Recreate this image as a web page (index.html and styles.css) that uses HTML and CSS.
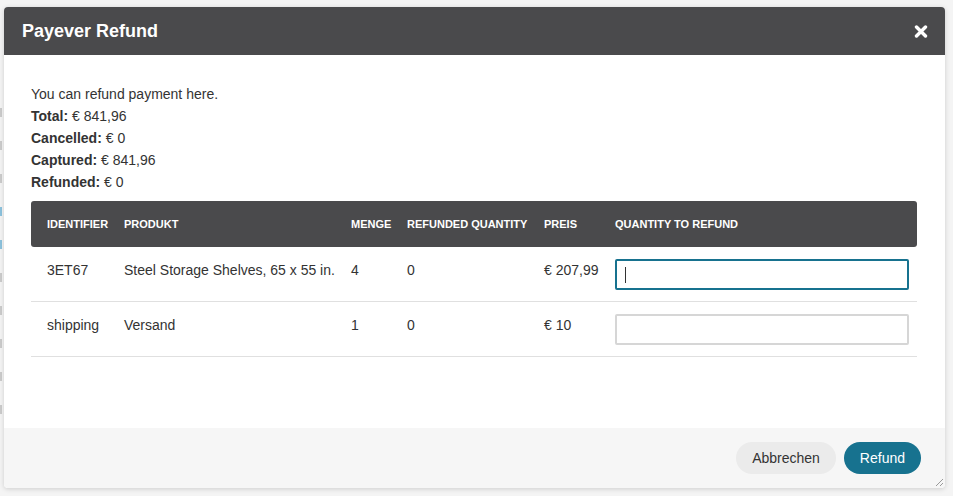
FILE: index.html
```html
<!DOCTYPE html>
<html lang="de">
<head>
<meta charset="utf-8">
<title>Payever Refund</title>
<link rel="stylesheet" href="styles.css">
</head>
<body>
<div class="page" aria-hidden="true">
  <div class="page-marks">
    <span class="mark"></span>
    <span class="mark"></span>
    <span class="mark"></span>
    <span class="mark link"></span>
    <span class="mark link"></span>
    <span class="mark"></span>
    <span class="mark"></span>
    <span class="mark"></span>
    <span class="mark"></span>
    <span class="mark"></span>
  </div>
</div>

<div class="dialog" role="dialog" aria-labelledby="dlg-title">
  <header class="dialog-header">
    <h2 class="dialog-title" id="dlg-title">Payever Refund</h2>
    <button class="dialog-close" type="button" aria-label="Close">
      <svg width="14" height="13" viewBox="0 0 14 13" aria-hidden="true">
        <path d="M2.5 2 L11.5 11 M11.5 2 L2.5 11" stroke="#fff" stroke-width="3.4" stroke-linecap="round"/>
      </svg>
    </button>
  </header>

  <div class="dialog-body">
    <div class="summary">
      <p>You can refund payment here.</p>
      <p><b>Total:</b> € 841,96</p>
      <p><b>Cancelled:</b> € 0</p>
      <p><b>Captured:</b> € 841,96</p>
      <p><b>Refunded:</b> € 0</p>
    </div>

    <table class="items">
      <colgroup>
        <col class="c-id">
        <col class="c-prod">
        <col class="c-qty">
        <col class="c-ref">
        <col class="c-price">
        <col class="c-input">
      </colgroup>
      <thead>
        <tr>
          <th>Identifier</th>
          <th>Produkt</th>
          <th>Menge</th>
          <th>Refunded quantity</th>
          <th>Preis</th>
          <th>Quantity to refund</th>
        </tr>
      </thead>
      <tbody>
        <tr>
          <td>3ET67</td>
          <td>Steel Storage Shelves, 65 x 55 in.</td>
          <td>4</td>
          <td>0</td>
          <td>€ 207,99</td>
          <td class="input-cell">
            <div class="field">
              <input class="qty-input focused" type="text" aria-label="Quantity to refund">
              <span class="caret"></span>
            </div>
          </td>
        </tr>
        <tr>
          <td>shipping</td>
          <td>Versand</td>
          <td>1</td>
          <td>0</td>
          <td>€ 10</td>
          <td class="input-cell">
            <div class="field">
              <input class="qty-input" type="text" aria-label="Quantity to refund">
            </div>
          </td>
        </tr>
      </tbody>
    </table>
  </div>

  <footer class="dialog-footer">
    <button class="btn btn-secondary" type="button">Abbrechen</button>
    <button class="btn btn-primary" type="button">Refund</button>
    <span class="resize-handle" aria-hidden="true">
      <svg width="10" height="10" viewBox="0 0 10 10">
        <path d="M9 2 L2 9 M9 6 L6 9" stroke="#9a9a9a" stroke-width="1"/>
      </svg>
    </span>
  </footer>
</div>
</body>
</html>
```

FILE: styles.css
```css
* {
  box-sizing: border-box;
}

html, body {
  margin: 0;
  padding: 0;
  height: 100%;
}

body {
  background: #f4f4f4;
  font-family: "Liberation Sans", Arial, Helvetica, sans-serif;
  font-size: 14px;
  color: #333;
  overflow: hidden;
}

.page {
  height: 100%;
  padding-top: 108px;
}

.page-marks {
  display: flex;
  flex-direction: column;
  gap: 24px;
}

.mark {
  display: block;
  width: 2px;
  height: 9px;
  background: #cbcbcb;
}

.mark.link {
  background: #8cc2dd;
}

.dialog {
  position: absolute;
  left: 4px;
  top: 7px;
  width: 941px;
  height: 481px;
  display: flex;
  flex-direction: column;
  background: #fff;
  border-radius: 4px;
  box-shadow: 0 1px 5px rgba(0, 0, 0, 0.16);
  overflow: hidden;
}

.dialog-header {
  flex: 0 0 48px;
  height: 48px;
  background: #4a4a4c;
  display: flex;
  align-items: center;
  justify-content: space-between;
  padding: 0 17px 0 18px;
}

.dialog-title {
  margin: 0;
  color: #fff;
  font-size: 18px;
  font-weight: bold;
  line-height: 22px;
}

.dialog-close {
  border: 0;
  background: none;
  padding: 0;
  margin: 0;
  width: 14px;
  height: 13px;
  display: flex;
  cursor: pointer;
}

.dialog-body {
  flex: 1 1 auto;
  padding: 28px 28px 0 27px;
}

.summary p {
  margin: 0;
  line-height: 22px;
}

.summary b {
  font-weight: bold;
}

.items {
  margin-top: 8px;
  width: 886px;
  border-collapse: separate;
  border-spacing: 0;
  table-layout: fixed;
}

.c-id { width: 85px; }
.c-prod { width: 227px; }
.c-qty { width: 56px; }
.c-ref { width: 137px; }
.c-price { width: 71px; }
.c-input { width: 310px; }

.items th {
  background: #4a4a4c;
  color: #fff;
  font-size: 11px;
  font-weight: bold;
  text-transform: uppercase;
  text-align: left;
  height: 46px;
  padding: 0 8px;
  vertical-align: middle;
  white-space: nowrap;
}

.items th:first-child {
  padding-left: 16px;
  border-radius: 3px 0 0 3px;
}

.items th:last-child {
  border-radius: 0 3px 3px 0;
}

.items td {
  padding: 13px 8px 10px;
  line-height: 20px;
  vertical-align: top;
  border-bottom: 1px solid #e0e0e0;
  white-space: nowrap;
}

.items td:first-child {
  padding-left: 16px;
}

.items td.input-cell {
  padding: 12px 8px 11px;
}

.field {
  position: relative;
}

.qty-input {
  display: block;
  width: 100%;
  height: 31px;
  border: 2px solid #d6d6d6;
  border-radius: 2px;
  background: #fff;
  font: inherit;
  padding: 0 8px;
  outline: none;
}

.qty-input.focused {
  border-color: #17728f;
}

.caret {
  position: absolute;
  left: 10px;
  top: 8px;
  width: 1px;
  height: 16px;
  background: #333;
}

.dialog-footer {
  flex: 0 0 60px;
  height: 60px;
  background: #f6f6f6;
  display: flex;
  justify-content: flex-end;
  align-items: flex-start;
  gap: 8px;
  padding: 14px 24px 0;
  position: relative;
}

.btn {
  height: 32px;
  border: 0;
  border-radius: 16px;
  padding: 0 16px;
  font-family: inherit;
  font-size: 14px;
  line-height: 32px;
  cursor: pointer;
}

.btn-secondary {
  background: #ebebeb;
  color: #333;
}

.btn-primary {
  background: #17728f;
  color: #fff;
}

.resize-handle {
  position: absolute;
  right: 1px;
  bottom: 1px;
  width: 10px;
  height: 10px;
  display: flex;
}
```
